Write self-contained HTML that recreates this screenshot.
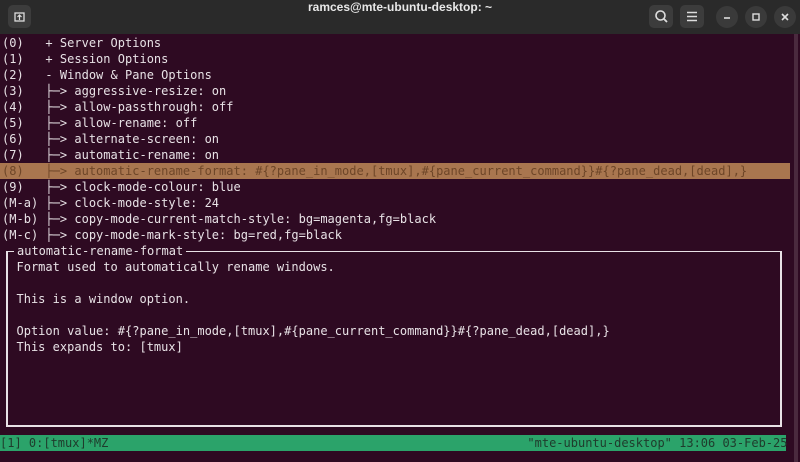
<!DOCTYPE html>
<html><head><meta charset="utf-8"><style>
*{margin:0;padding:0;box-sizing:border-box}
body{width:800px;height:462px;background:#2e0a22;overflow:hidden;position:relative;font-family:"DejaVu Sans Mono",monospace}
.tb{position:absolute;left:0;top:0;width:800px;height:34px;background:#2a2a2a;}
.tt{position:absolute;top:0;width:800px;text-align:center;line-height:33px;color:#e8e8e8;font:bold 12px "Liberation Sans",sans-serif}
.btn{position:absolute;background:#3c3c3c;border-radius:5px}
.rnd{position:absolute;width:22px;height:22px;border-radius:11px;background:#3a3a3a;top:6px}
.term{position:absolute;left:2px;top:35px;font-size:12px;letter-spacing:0.01px;line-height:16px;color:#e8e2e6;white-space:pre}
.ln{height:16px}
.hl{position:absolute;left:0;top:163px;width:790px;height:16px;background:#a9764f}
.hlt{color:#6e4628}
.box{position:absolute;left:6px;top:251px;width:776px;height:176px;border:2px solid #e8e2e6;border-top-width:1px}
.bt{position:absolute;left:14px;top:243px;padding:0 3px;background:#2e0a22;font-size:12px;line-height:16px;color:#e8e2e6;white-space:pre}
.st{position:absolute;left:0;top:435px;width:786px;height:16px;background:#2ba36a;color:#1f3b2c;font-size:12px;line-height:16px;white-space:pre}
.sb{position:absolute;left:794px;top:34px;width:4px;height:428px;background:#4a2a3e}
</style></head><body>
<div class="tb"></div>
<div class="btn" style="left:8px;top:5px;width:23px;height:23px"><svg width="23" height="23"><rect x="7" y="8" width="9" height="8" fill="none" stroke="#ddd" stroke-width="1.3"/><path d="M11.5 10v5M9.5 12l2-2 2 2" stroke="#ddd" stroke-width="1.2" fill="none"/></svg></div>
<div class="tt">ramces@mte-ubuntu-desktop: ~</div>
<div class="btn" style="left:649px;top:5px;width:24px;height:23px"><svg width="24" height="23"><circle cx="11.5" cy="10.5" r="4.5" fill="none" stroke="#ddd" stroke-width="1.6"/><path d="M15 14l3 3" stroke="#ddd" stroke-width="1.8"/></svg></div>
<div class="btn" style="left:680px;top:5px;width:24px;height:23px"><svg width="24" height="23"><path d="M7 7.5h10M7 11.5h10M7 15.5h10" stroke="#ddd" stroke-width="1.6"/></svg></div>
<div class="rnd" style="left:716px"><svg width="22" height="22"><path d="M8 12h6" stroke="#ddd" stroke-width="1.6"/></svg></div>
<div class="rnd" style="left:745px"><svg width="22" height="22"><rect x="8" y="8" width="6" height="6" fill="none" stroke="#ddd" stroke-width="1.4"/></svg></div>
<div class="rnd" style="left:774px"><svg width="22" height="22"><path d="M8 8l6 6M14 8l-6 6" stroke="#ddd" stroke-width="1.6"/></svg></div>
<div class="sb"></div>
<div class="hl"></div>
<div class="term"><div class="ln">(0)   + Server Options</div><div class="ln">(1)   + Session Options</div><div class="ln">(2)   - Window &amp; Pane Options</div><div class="ln">(3)   ├─> aggressive-resize: on</div><div class="ln">(4)   ├─> allow-passthrough: off</div><div class="ln">(5)   ├─> allow-rename: off</div><div class="ln">(6)   ├─> alternate-screen: on</div><div class="ln">(7)   ├─> automatic-rename: on</div><div class="ln hlt">(8)   ├─> automatic-rename-format: #{?pane_in_mode,[tmux],#{pane_current_command}}#{?pane_dead,[dead],}</div><div class="ln">(9)   ├─> clock-mode-colour: blue</div><div class="ln">(M-a) ├─> clock-mode-style: 24</div><div class="ln">(M-b) ├─> copy-mode-current-match-style: bg=magenta,fg=black</div><div class="ln">(M-c) ├─> copy-mode-mark-style: bg=red,fg=black</div><div class="ln"></div><div class="ln">  Format used to automatically rename windows.</div><div class="ln"></div><div class="ln">  This is a window option.</div><div class="ln"></div><div class="ln">  Option value: #{?pane_in_mode,[tmux],#{pane_current_command}}#{?pane_dead,[dead],}</div><div class="ln">  This expands to: [tmux]</div></div>
<div class="box"></div>
<div class="bt">automatic-rename-format</div>
<div class="st">[1] 0:[tmux]*MZ                                                          "mte-ubuntu-desktop" 13:06 03-Feb-25</div>
</body></html>
